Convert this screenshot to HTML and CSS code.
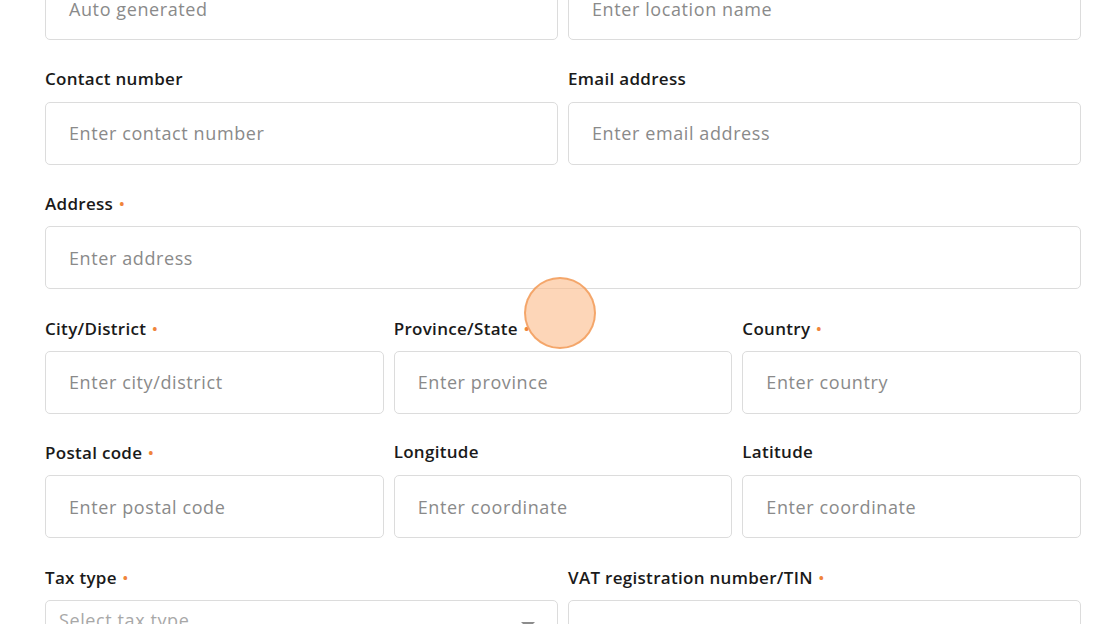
FILE: index.html
```html
<!DOCTYPE html>
<html lang="en">
<head>
<meta charset="utf-8">
<title>Location form</title>
<link rel="stylesheet" href="styles.css">
</head>
<body>
<form class="form">
  <div class="row cols-2">
    <div class="field">
      <label class="label">Location code</label>
      <div class="input">Auto generated</div>
    </div>
    <div class="field">
      <label class="label">Location name <span class="req">•</span></label>
      <div class="input">Enter location name</div>
    </div>
  </div>
  <div class="row cols-2">
    <div class="field">
      <label class="label">Contact number</label>
      <div class="input">Enter contact number</div>
    </div>
    <div class="field">
      <label class="label">Email address</label>
      <div class="input">Enter email address</div>
    </div>
  </div>
  <div class="row cols-1">
    <div class="field">
      <label class="label">Address <span class="req">•</span></label>
      <div class="input">Enter address</div>
    </div>
  </div>
  <div class="row cols-3">
    <div class="field">
      <label class="label">City/District <span class="req">•</span></label>
      <div class="input">Enter city/district</div>
    </div>
    <div class="field">
      <label class="label">Province/State <span class="req">•</span></label>
      <div class="input">Enter province</div>
    </div>
    <div class="field">
      <label class="label">Country <span class="req">•</span></label>
      <div class="input">Enter country</div>
    </div>
  </div>
  <div class="row cols-3">
    <div class="field">
      <label class="label">Postal code <span class="req">•</span></label>
      <div class="input">Enter postal code</div>
    </div>
    <div class="field">
      <label class="label">Longitude</label>
      <div class="input">Enter coordinate</div>
    </div>
    <div class="field">
      <label class="label">Latitude</label>
      <div class="input">Enter coordinate</div>
    </div>
  </div>
  <div class="row cols-2">
    <div class="field">
      <label class="label">Tax type <span class="req">•</span></label>
      <div class="input select"><span>Select tax type</span><span class="caret"></span></div>
    </div>
    <div class="field">
      <label class="label">VAT registration number/TIN <span class="req">•</span></label>
      <div class="input faint">Enter VAT registration number/TIN</div>
    </div>
  </div>
</form>
<div class="cursor"></div>
</body>
</html>
```
FILE: styles.css
```css
html, body {
  margin: 0;
  padding: 0;
  background: #ffffff;
  overflow: hidden;
  height: 624px;
}
body {
  font-family: "Open Sans", "Liberation Sans", sans-serif;
  color: #1c1c1c;
  position: relative;
}
.form {
  margin: -56px 39px 0 45px;
  display: flex;
  flex-direction: column;
  gap: 28.6px;
}
.row {
  display: grid;
  gap: 10px;
}
.cols-1 { grid-template-columns: 1fr; }
.cols-2 { grid-template-columns: 1fr 1fr; }
.cols-3 { grid-template-columns: 1fr 1fr 1fr; }
.field {
  display: flex;
  flex-direction: column;
  gap: 13px;
}
.label {
  font-size: 17px;
  font-weight: 600;
  line-height: 20px;
  height: 20px;
  letter-spacing: 0.3px;
  color: #1a1a1a;
  white-space: nowrap;
}
.req {
  color: #f0843a;
  font-size: 15px;
  margin-left: 1px;
  vertical-align: 1px;
}
.input {
  box-sizing: border-box;
  height: 63px;
  border: 1px solid #dcdcdc;
  border-radius: 5px;
  padding: 0 23px;
  display: flex;
  align-items: center;
  font-size: 18px;
  color: #8a8a8a;
  letter-spacing: 0.6px;
  white-space: nowrap;
  overflow: hidden;
}
.select {
  align-items: flex-start;
  justify-content: space-between;
  padding: 7px 22px 0 13px;
  font-size: 18px;
  letter-spacing: 0.6px;
  color: #a8a8a8;
}
.caret {
  width: 0;
  height: 0;
  border-left: 7px solid transparent;
  border-right: 7px solid transparent;
  border-top: 7px solid #8c8c8c;
  margin-top: 14px;
}
.faint {
  color: #e4e4e4;
  padding-top: 18px;
  align-items: flex-start;
}
.cursor {
  position: absolute;
  left: 524px;
  top: 277px;
  width: 68px;
  height: 68px;
  border-radius: 50%;
  background: rgba(252, 186, 136, 0.6);
  border: 2px solid rgba(240, 150, 80, 0.75);
}
```
